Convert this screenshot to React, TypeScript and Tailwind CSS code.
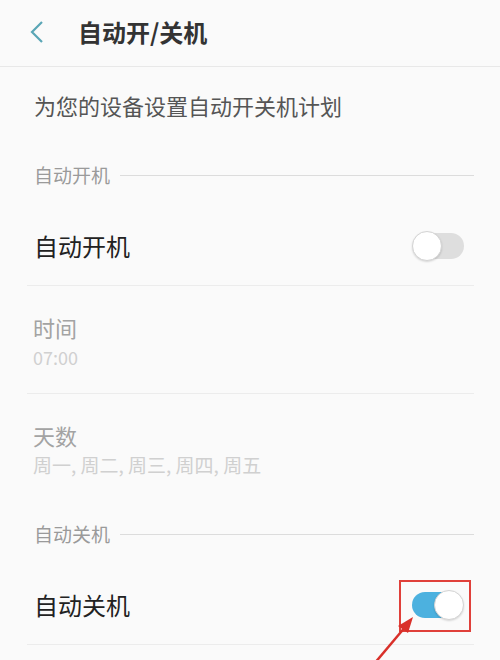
const font = { fontFamily: '"Noto Sans CJK SC", "Noto Sans", sans-serif' };

function Toggle({ on }: { on: boolean }) {
  return (
    <div className="relative h-[30px] w-[52px]">
      <div
        className={
          on
            ? "absolute left-0 top-[2px] h-[26px] w-[46px] rounded-full bg-[#4cb1df]"
            : "absolute right-0 top-[2px] h-[26px] w-[46px] rounded-full bg-[#dedede]"
        }
      />
      <div
        className={
          "absolute top-0 h-[30px] w-[30px] rounded-full border border-[#d4d4d4] bg-white shadow-[0_1px_2px_rgba(0,0,0,0.15)] " +
          (on ? "right-0" : "left-0")
        }
      />
    </div>
  );
}

function SectionHeader({ title, className }: { title: string; className: string }) {
  return (
    <div className={"flex items-center pl-[34px] pr-[26px] " + className}>
      <span className="text-[19px] leading-6 text-[#9a9a9a]">{title}</span>
      <div className="ml-[10px] h-px flex-1 bg-[#dcdcdc]" />
    </div>
  );
}

export default function App() {
  return (
    <div className="relative h-[660px] w-[500px] overflow-hidden bg-[#fafafa]" style={font}>
      <header className="flex h-[67px] items-center border-b border-[#e8e8e8] pb-[3px]">
        <svg className="ml-[29px]" width="16" height="24" viewBox="0 0 16 24">
          <path d="M13 2 L3 12 L13 22" fill="none" stroke="#5aa6b6" strokeWidth="2.2" />
        </svg>
        <h1 className="ml-[33px] text-[24px] font-bold leading-8 text-[#333]">自动开/关机</h1>
      </header>

      <div className="flex h-[76px] items-center pl-[34px]">
        <p className="text-[22px] leading-[30px] text-[#555]">为您的设备设置自动开关机计划</p>
      </div>

      <SectionHeader title="自动开机" className="h-[64px]" />

      <div className="ml-[27px] mr-[26px] flex h-[79px] items-center justify-between border-b border-[#ececec] pl-[7px] pr-[10px]">
        <span className="text-[24px] leading-8 text-[#222]">自动开机</span>
        <Toggle on={false} />
      </div>

      <div className="ml-[27px] mr-[26px] flex h-[108px] flex-col gap-[3px] border-b border-[#ececec] pl-[6px] pt-[26px]">
        <span className="text-[22px] leading-[30px] text-[#a3a3a3]">时间</span>
        <span className="text-[18px] leading-6 text-[#d0d0d0]">07:00</span>
      </div>

      <div className="ml-[27px] mr-[26px] flex h-[108px] flex-col gap-[3px] pl-[6px] pt-[26px]">
        <span className="text-[22px] leading-[30px] text-[#a3a3a3]">天数</span>
        <span className="text-[19px] leading-6 text-[#d0d0d0]">周一, 周二, 周三, 周四, 周五</span>
      </div>

      <SectionHeader title="自动关机" className="h-[64px]" />

      <div className="ml-[27px] mr-[26px] flex h-[79px] items-center justify-between border-b border-[#ececec] pl-[7px] pr-[10px]">
        <span className="text-[24px] leading-8 text-[#222]">自动关机</span>
        <div className="relative">
          <Toggle on />
          <span className="absolute -bottom-[12px] -left-[13px] -right-[7px] -top-[10px] border-2 border-[#e0403a]" />
        </div>
      </div>

      <svg className="absolute left-0 top-0" width="500" height="660" viewBox="0 0 500 660">
        <line x1="374" y1="664" x2="406" y2="626" stroke="#d9302a" strokeWidth="2.5" />
        <polygon points="413,617 398,626 408,633" fill="#d9302a" />
      </svg>
    </div>
  );
}
